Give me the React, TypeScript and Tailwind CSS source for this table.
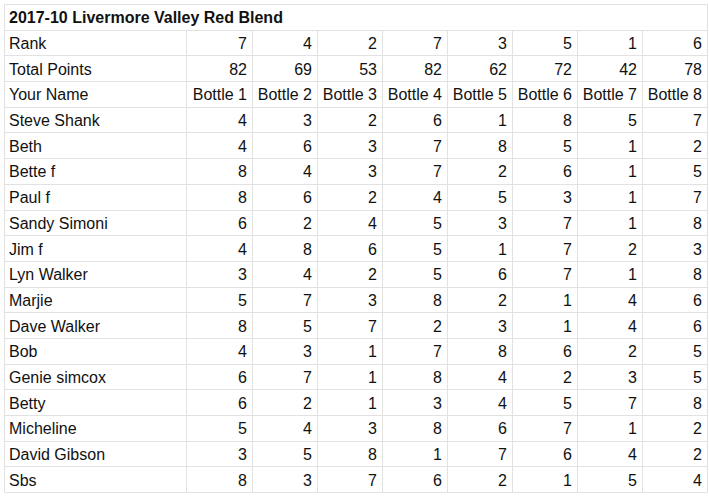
import React from "react";

const header = {
  rank: [7, 4, 2, 7, 3, 5, 1, 6],
  total: [82, 69, 53, 82, 62, 72, 42, 78],
};

const votes: [string, number[]][] = [
  ["Steve Shank", [4, 3, 2, 6, 1, 8, 5, 7]],
  ["Beth", [4, 6, 3, 7, 8, 5, 1, 2]],
  ["Bette f", [8, 4, 3, 7, 2, 6, 1, 5]],
  ["Paul f", [8, 6, 2, 4, 5, 3, 1, 7]],
  ["Sandy Simoni", [6, 2, 4, 5, 3, 7, 1, 8]],
  ["Jim f", [4, 8, 6, 5, 1, 7, 2, 3]],
  ["Lyn Walker", [3, 4, 2, 5, 6, 7, 1, 8]],
  ["Marjie", [5, 7, 3, 8, 2, 1, 4, 6]],
  ["Dave Walker", [8, 5, 7, 2, 3, 1, 4, 6]],
  ["Bob", [4, 3, 1, 7, 8, 6, 2, 5]],
  ["Genie simcox", [6, 7, 1, 8, 4, 2, 3, 5]],
  ["Betty", [6, 2, 1, 3, 4, 5, 7, 8]],
  ["Micheline", [5, 4, 3, 8, 6, 7, 1, 2]],
  ["David Gibson", [3, 5, 8, 1, 7, 6, 4, 2]],
  ["Sbs", [8, 3, 7, 6, 2, 1, 5, 4]],
];

function Row({ label, cells }: { label: string; cells: (string | number)[] }) {
  return (
    <>
      <div className="bg-white flex items-center pl-[4px] pt-[2px]">{label}</div>
      {cells.map((c, i) => (
        <div key={i} className="bg-white flex items-center justify-end pr-[5px] pt-[2px]">
          {c}
        </div>
      ))}
    </>
  );
}

export default function App() {
  return (
    <div className="bg-white w-[709px] h-[500px] pl-[4px] pt-[4px] font-['Liberation_Sans',Arial,sans-serif] text-[16px] text-[#111]">
      <div className="inline-grid grid-cols-[181px_65px_repeat(7,64px)] auto-rows-[24.7px] gap-px p-px bg-[#e2e2e2]">
        <div className="col-span-9 bg-white flex items-center pl-[4px] pt-[1px] font-bold">
          2017-10 Livermore Valley Red Blend
        </div>
        <Row label="Rank" cells={header.rank} />
        <Row label="Total Points" cells={header.total} />
        <Row label="Your Name" cells={[1, 2, 3, 4, 5, 6, 7, 8].map((n) => `Bottle ${n}`)} />
        {votes.map(([name, v]) => (
          <Row key={name} label={name} cells={v} />
        ))}
      </div>
    </div>
  );
}
